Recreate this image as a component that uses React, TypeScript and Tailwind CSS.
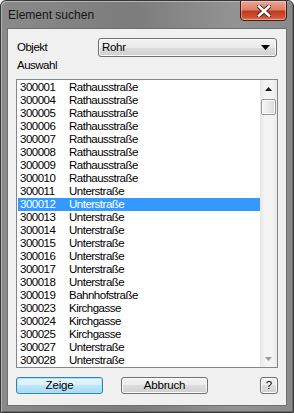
const rows: [string, string][] = [
  ["300001", "Rathausstraße"],
  ["300004", "Rathausstraße"],
  ["300005", "Rathausstraße"],
  ["300006", "Rathausstraße"],
  ["300007", "Rathausstraße"],
  ["300008", "Rathausstraße"],
  ["300009", "Rathausstraße"],
  ["300010", "Rathausstraße"],
  ["300011", "Unterstraße"],
  ["300012", "Unterstraße"],
  ["300013", "Unterstraße"],
  ["300014", "Unterstraße"],
  ["300015", "Unterstraße"],
  ["300016", "Unterstraße"],
  ["300017", "Unterstraße"],
  ["300018", "Unterstraße"],
  ["300019", "Bahnhofstraße"],
  ["300023", "Kirchgasse"],
  ["300024", "Kirchgasse"],
  ["300025", "Kirchgasse"],
  ["300027", "Unterstraße"],
  ["300028", "Unterstraße"],
];

const font = { fontFamily: '"Liberation Sans", Arial, sans-serif' };

const CloseButton = () => (
  <div className="-mt-px mr-[6px] flex h-[21px] w-[47px] items-center justify-center rounded-b-[4px] border border-[#4a1a10] bg-[linear-gradient(180deg,#eaa896_0%,#dc8069_45%,#c23a1e_55%,#cf5034_85%,#e07e60_100%)] shadow-[inset_0_0_0_1px_rgba(255,220,210,0.45)]">
    <svg width="14" height="12" viewBox="0 0 14 12">
      <path d="M2 1.5 L12 10.5 M12 1.5 L2 10.5" stroke="#4a2a25" strokeWidth="4.5" strokeLinecap="square" />
      <path d="M2 1.5 L12 10.5 M12 1.5 L2 10.5" stroke="#ffffff" strokeWidth="2.5" strokeLinecap="square" />
    </svg>
  </div>
);

const ListBox = () => (
  <div className="mt-[7px] flex h-[289px] w-[262px] border border-[#828790] bg-white">
    <div className="flex-1 overflow-hidden pl-px pt-px">
      {rows.map(([id, name]) => {
        const sel = id === "300012";
        return (
          <div
            key={id}
            className={`flex h-[13px] items-center text-[11.5px] leading-[13px] tracking-[-0.5px] ${
              sel ? "bg-[#3399ff] text-white" : "text-black"
            }`}
          >
            <span className="w-[51px] pl-[2px]">{id}</span>
            <span>{name}</span>
          </div>
        );
      })}
    </div>
    <div className="flex w-[17px] flex-col bg-[linear-gradient(90deg,#e6e6e6,#f4f4f4_30%,#f4f4f4_70%,#e9e9e9)]">
      <div className="flex h-[17px] items-center justify-center">
        <svg width="7" height="4" viewBox="0 0 7 4">
          <path d="M3.5 0 L7 4 L0 4 Z" fill="#1a1a1a" />
        </svg>
      </div>
      <div className="mx-px mt-[2px] h-[16px] rounded-[2px] border border-[#979797] bg-[linear-gradient(90deg,#f6f6f6,#e9e9e9_50%,#d9d9d9)] shadow-[inset_0_0_0_1px_#fbfbfb]" />
      <div className="flex-1" />
      <div className="flex h-[17px] items-center justify-center">
        <svg width="7" height="4" viewBox="0 0 7 4">
          <path d="M0 0 L7 0 L3.5 4 Z" fill="#9a9a9a" />
        </svg>
      </div>
    </div>
  </div>
);

export default function App() {
  return (
    <div
      style={font}
      className="flex h-[413px] w-[294px] flex-col overflow-hidden rounded-t-[6px] border border-[#363636] bg-[linear-gradient(90deg,#8a8a8a,#7c7c7c_45%,#939393_80%,#8a8a8a)] shadow-[inset_1px_1px_0_#b4b4b4,inset_-1px_-1px_0_#6a6a6a]"
    >
      {/* Title bar */}
      <div className="flex h-[27px] shrink-0 items-start">
        <div className="flex h-[27px] items-center pl-[7px] text-[12px] text-[#151515]">
          Element suchen
        </div>
        <div className="ml-auto">
          <CloseButton />
        </div>
      </div>

      {/* Client area */}
      <div className="mx-[6px] mb-[6px] flex-1 border border-[#6f6f6f] bg-[#f0f0f0] px-[8px] text-[11.5px] text-black">
        <div className="mt-[9px] flex h-[19px] items-center">
          <span className="pl-px tracking-[-0.5px]">Objekt</span>
          <div className="ml-auto mr-px flex h-[19px] w-[179px] items-center rounded-[3px] border border-[#707070] bg-[linear-gradient(180deg,#f3f3f3_0%,#ebebeb_50%,#dddddd_50%,#cfcfcf_100%)] pl-[3px] pr-[6px] shadow-[inset_0_0_0_1px_#fafafa]">
            <span className="tracking-[-0.3px]">Rohr</span>
            <svg className="ml-auto" width="9" height="5" viewBox="0 0 9 5">
              <path d="M0 0 L9 0 L4.5 5 Z" fill="#000" />
            </svg>
          </div>
        </div>
        <div className="mt-[2px] h-[13px] pl-px leading-[13px] tracking-[-0.5px]">Auswahl</div>
        <ListBox />

        <div className="mt-[9px] flex h-[17px] items-center">
          <button className="flex h-[17px] w-[87px] items-center justify-center rounded-[3px] border border-[#3c7fb1] bg-[linear-gradient(180deg,#eaf6fd_0%,#d9f0fc_50%,#bee6fd_50%,#a7d9f5_100%)] text-[11.5px] tracking-[-0.2px] shadow-[inset_0_0_0_1px_#9ee8fd]">
            Zeige
          </button>
          <button className="ml-[18px] flex h-[17px] w-[87px] items-center justify-center rounded-[3px] border border-[#707070] bg-[linear-gradient(180deg,#f2f2f2_0%,#ebebeb_50%,#dddddd_50%,#cfcfcf_100%)] text-[11.5px] tracking-[-0.2px] shadow-[inset_0_0_0_1px_#fbfbfb]">
            Abbruch
          </button>
          <button className="ml-auto flex h-[17px] w-[18px] items-center justify-center rounded-[3px] border border-[#707070] bg-[linear-gradient(180deg,#f2f2f2_0%,#ebebeb_50%,#dddddd_50%,#cfcfcf_100%)] text-[11.5px] shadow-[inset_0_0_0_1px_#fbfbfb]">
            ?
          </button>
        </div>
      </div>
    </div>
  );
}
